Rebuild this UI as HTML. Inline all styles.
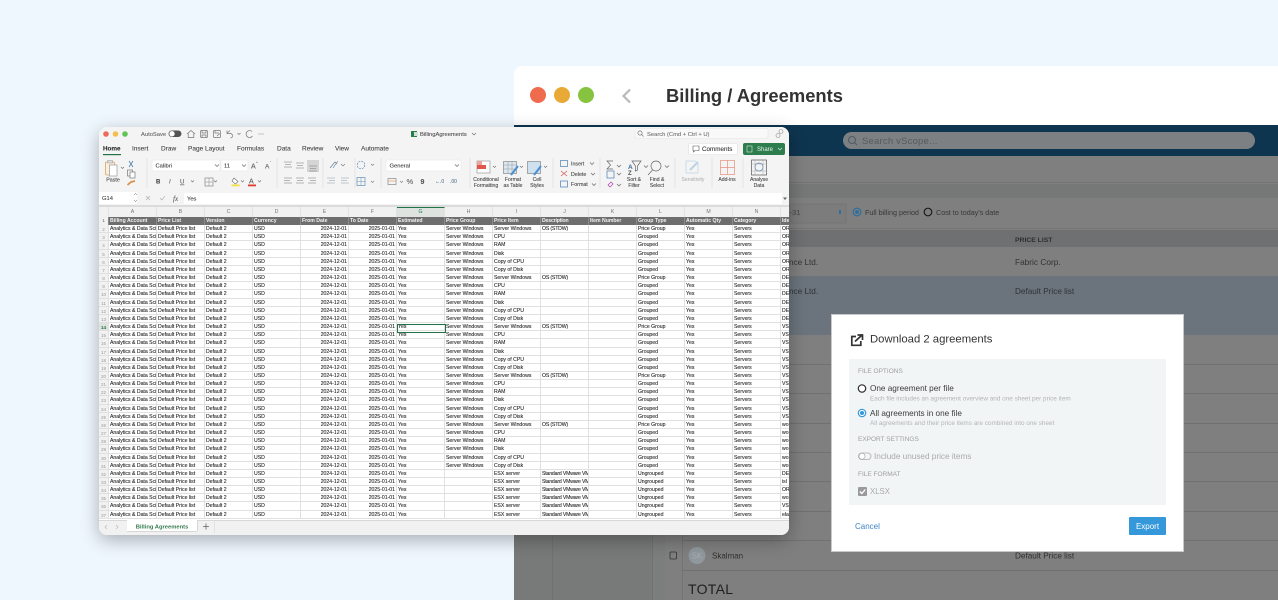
<!DOCTYPE html>
<html lang="en"><head><meta charset="utf-8"><title>Billing / Agreements</title>
<style>
html,body{margin:0;padding:0;width:1278px;height:600px;overflow:hidden;background:#eff7fe;font-family:"Liberation Sans",sans-serif}
#bg{position:absolute;left:0;top:0}
#xl{position:absolute;left:99px;top:127px;width:690px;height:408px;background:#f4f4f4;border-radius:8px;overflow:hidden;box-shadow:0 5px 18px rgba(0,0,0,.3)}
#xl svg{position:absolute;left:-99px;top:-127px}
#xl svg text{stroke:#666;stroke-width:.1}
#grid{position:absolute;left:0;top:80px;width:690px;height:313px;background:#fff;overflow:hidden}
.h{display:flex;height:10px;background:#f1f1f1}
.h i{width:48px;flex:none;box-sizing:border-box;border-right:1px solid #e2e2e2;text-align:center;font:normal 5.2px/10px "Liberation Sans",sans-serif;color:#777}
.h i:first-child{width:10px}
.h i.s{background:#dfe3df;color:#217346;border-top:1px solid #217346;line-height:9px}
.r{display:flex;height:8.17px;box-sizing:border-box;border-bottom:1px solid #e0e0e0}
.r i{width:48px;flex:none;box-sizing:border-box;border-right:1px solid #e0e0e0;padding-left:1px;overflow:hidden;white-space:nowrap;font:normal 5.15px/9.4px "Liberation Sans",sans-serif;color:#1c1c1c;-webkit-text-stroke:.1px #333}
.r i:first-child{width:10px;background:#f1f1f1;padding:0;text-align:center;color:#999;font-size:4.6px;-webkit-text-stroke:0}
.r i:nth-child(6),.r i:nth-child(7){text-align:right;padding-right:1px}
.r i:nth-child(11){letter-spacing:-.16px}
.r.t{background:#6e6e6e;border-bottom:0}
.r.t i{color:#f2f2f2;font-weight:bold;border-right:1px solid #8a8a8a;-webkit-text-stroke:0;line-height:8.4px}
.r.t i:first-child{color:#666;font-weight:normal;background:#f1f1f1}
.sel{position:absolute;left:298px;top:117px;width:49px;height:9px;box-sizing:border-box;border:1px solid #217346}
</style></head><body>

<svg id="bg" width="1278" height="600" viewBox="0 0 1278 600" font-family="'Liberation Sans',sans-serif">
<path d="M514 600V74a8 8 0 0 1 8-8H1278V600Z" fill="#fff"/>
<rect x="514" y="125" width="764" height="31" fill="#0e3550"/>
<rect x="514" y="156" width="764" height="444" fill="#7f7f7f"/>
<rect x="514" y="184" width="764" height="14" fill="#767878"/>
<rect x="514" y="182" width="764" height="1" fill="#747474"/>
<rect x="514" y="228" width="764" height="1" fill="#747474"/>
<rect x="514" y="230" width="764" height="17" fill="#6f7071"/>
<rect x="514" y="276" width="764" height="59" fill="#6b747c"/>
<g fill="#707070">
<rect x="682" y="364" width="596" height="1"/><rect x="682" y="393" width="596" height="1"/><rect x="682" y="423" width="596" height="1"/><rect x="682" y="452" width="596" height="1"/><rect x="682" y="481" width="596" height="1"/><rect x="682" y="511" width="596" height="1"/><rect x="682" y="540" width="596" height="1"/><rect x="682" y="570" width="596" height="1"/>
</g>
<rect x="514" y="530" width="138" height="70" fill="#777a79"/>
<rect x="552" y="530" width="1" height="70" fill="#6f7271"/>
<rect x="652" y="530" width="1" height="70" fill="#6f7271"/>
<rect x="653" y="530" width="12" height="70" fill="#7c7d7d"/>
<rect x="682" y="530" width="1" height="70" fill="#737373"/>
<circle cx="538" cy="95" r="8" fill="#ee6c4d"/><circle cx="562" cy="95" r="8" fill="#e9a936"/><circle cx="586" cy="95" r="8" fill="#86c440"/>
<path d="M630 89.5L623.5 96L630 102.500" fill="none" stroke="#b9b9b9" stroke-width="2.200"/>
<text x="666" y="102" font-size="18.500" font-weight="bold" fill="#333" textLength="177" lengthAdjust="spacingAndGlyphs">Billing / Agreements</text>
<rect x="843" y="132" width="412" height="17" rx="8.500" fill="#7d8082"/>
<circle cx="852" cy="140" r="3.500" fill="none" stroke="#4f5a62" stroke-width="1"/><path d="M854.500 142.500L857 145" stroke="#4f5a62"/>
<text x="862" y="144" font-size="9.500" fill="#535a60" letter-spacing=".2">Search vScope...</text>
<rect x="790" y="204" width="56" height="19" fill="#7c7c7c" stroke="#757575"/>
<text x="789.500" y="215" font-size="7.500" fill="#444">-31</text>
<rect x="839" y="210" width="2" height="4" fill="#2f6f9f"/>
<circle cx="857" cy="212" r="3.800" fill="none" stroke="#2a6e9e" stroke-width="1.200"/><circle cx="857" cy="212" r="1.900" fill="#2a6e9e"/>
<text x="865" y="215" font-size="7.200" fill="#383838">Full billing period</text>
<circle cx="928" cy="212" r="3.800" fill="none" stroke="#1c1c1c" stroke-width="1.200"/>
<text x="936" y="215" font-size="7.200" fill="#383838">Cost to today's date</text>
<text x="1015" y="242" font-size="6.800" font-weight="bold" fill="#2e2e2e">PRICE LIST</text>
<text x="789" y="265" font-size="8.200" fill="#333">nce Ltd.</text>
<text x="1015" y="265" font-size="8.300" fill="#333">Fabric Corp.</text>
<text x="789" y="294" font-size="8.200" fill="#2e3338">nce Ltd.</text>
<text x="1015" y="294" font-size="8.200" fill="#2e3338">Default Price list</text>
<rect x="670" y="552" width="6.500" height="7" rx="1" fill="none" stroke="#333" stroke-width=".8"/>
<circle cx="697" cy="555.500" r="8.500" fill="#8f989d"/>
<text x="697" y="558.500" font-size="8" text-anchor="middle" fill="#a9b0b4">SK</text>
<text x="712" y="558.500" font-size="8" fill="#2f2f2f">Skalman</text>
<text x="1015" y="558.500" font-size="8.200" fill="#2f2f2f">Default Price list</text>
<text x="688" y="594" font-size="14" fill="#1f1f1f" letter-spacing=".3">TOTAL</text>
<rect x="831" y="314" width="353" height="238" fill="#fff"/>
<rect x="831.500" y="314.500" width="352" height="237" fill="none" stroke="#c9c9c9"/>
<path d="M856 336.500H851.800V345.300H860.800V341" fill="none" stroke="#333" stroke-width="1.700"/>
<path d="M855 341.500L861.500 335.500M857.500 335H862.500V340" fill="none" stroke="#333" stroke-width="1.700"/>
<text x="870" y="342.500" font-size="11.300" fill="#333">Download 2 agreements</text>
<rect x="849" y="359" width="317" height="146" fill="#f1f5f6"/>
<g font-size="6.500" fill="#9f9f9f"><text x="858" y="373">FILE OPTIONS</text><text x="858" y="441">EXPORT SETTINGS</text><text x="858" y="476">FILE FORMAT</text></g>
<circle cx="862" cy="388.500" r="3.700" fill="#fff" stroke="#2a2a2a" stroke-width="1.200"/>
<text x="870" y="391" font-size="8.200" fill="#3c3c3c">One agreement per file</text>
<text x="870" y="400.500" font-size="6.400" fill="#b4b4b4">Each file includes an agreement overview and one sheet per price item</text>
<circle cx="862" cy="413" r="3.700" fill="#fff" stroke="#3498db" stroke-width="1.200"/><circle cx="862" cy="413" r="2" fill="#3498db"/>
<text x="870" y="416" font-size="8.200" fill="#3c3c3c">All agreements in one file</text>
<text x="870" y="425" font-size="6.400" fill="#b4b4b4">All agreements and their price items are combined into one sheet</text>
<rect x="858.500" y="453" width="12.500" height="6.500" rx="3.250" fill="#f4f6f6" stroke="#aaa" stroke-width=".8"/><circle cx="862" cy="456.200" r="3" fill="#fff" stroke="#aaa" stroke-width=".7"/>
<text x="874" y="459" font-size="8.200" fill="#aaa">Include unused price items</text>
<rect x="858" y="487" width="9" height="9" rx="1" fill="#9a9a9a"/><path d="M859.800 491.500L861.800 493.500L865.300 489.500" fill="none" stroke="#fff" stroke-width="1.300"/>
<text x="870" y="494" font-size="7.800" fill="#aaa">XLSX</text>
<text x="855" y="529" font-size="8" fill="#3f85c4">Cancel</text>
<rect x="1129" y="517" width="37" height="18" rx="1" fill="#3498db"/>
<text x="1147.500" y="529" font-size="8" fill="#fff" text-anchor="middle">Export</text>
</svg>

<div id="xl">
<svg width="1278" height="600" viewBox="0 0 1278 600" font-family="'Liberation Sans',sans-serif">
<rect x="99" y="127" width="690" height="408" fill="#f4f4f4"/>
<circle cx="106" cy="134" r="2.800" fill="#ec6a5e"/><circle cx="115.500" cy="134" r="2.800" fill="#f4bf4f"/><circle cx="125" cy="134" r="2.800" fill="#61c554"/>
<text x="141" y="136" font-size="5.800" fill="#666">AutoSave</text>
<rect x="168.500" y="130.500" width="13" height="6.500" rx="3.250" fill="#555"/><circle cx="172" cy="133.750" r="2.700" fill="#fff"/>
<g fill="none" stroke="#777" stroke-width=".7">
<path d="M187 134L191 130.500L195 134M188.200 133.500V137.500H193.800V133.500"/>
<rect x="200.500" y="130.500" width="7" height="7" rx="1"/><path d="M202 130.500V133H206V130.500M202 137.500V135H206V137.500"/>
<rect x="213.500" y="130.500" width="7" height="7" rx="1"/><path d="M215 130.500V133H219M217 136L220 133.500"/>
<path d="M227 130.500V133.500H230C233 133.500 233.500 137.500 230.500 138M227 133.500L230 130.500"/>
<path d="M237.500 133L239 134.500L240.500 133"/>
<path d="M252 131.500A3.500 3.500 0 1 0 252.500 136"/>
</g>
<text x="258" y="136" font-size="6" fill="#777">⋯</text>
<rect x="411" y="131" width="6" height="6" fill="#2a7d4d"/><rect x="414" y="132" width="4" height="4" fill="#cfe3d7"/>
<text x="420" y="136" font-size="5.800" fill="#444">BillingAgreements</text>
<path d="M472 133L474 135L476 133" fill="none" stroke="#666" stroke-width=".6"/>
<rect x="635" y="128.500" width="133" height="10" rx="2" fill="#f9f9f9" stroke="#e4e4e4" stroke-width=".6"/>
<circle cx="640" cy="133" r="2.100" fill="none" stroke="#777" stroke-width=".7"/><path d="M641.500 134.500L643.500 136.500" stroke="#777" stroke-width=".7"/>
<text x="647" y="135.800" font-size="5.800" fill="#777">Search (Cmd + Ctrl + U)</text>
<circle cx="781" cy="131.500" r="2" fill="none" stroke="#888" stroke-width=".6"/><circle cx="778" cy="135.500" r="2" fill="none" stroke="#888" stroke-width=".6"/>
<g font-size="6.500" fill="#333">
<text x="103" y="150.500" font-weight="bold" fill="#222" font-size="6.300">Home</text>
<text x="132" y="150.500">Insert</text><text x="161" y="150.500">Draw</text><text x="188" y="150.500">Page Layout</text><text x="237" y="150.500">Formulas</text><text x="277" y="150.500">Data</text><text x="302" y="150.500">Review</text><text x="335" y="150.500">View</text><text x="361" y="150.500">Automate</text>
</g>
<rect x="103" y="154" width="18" height="1.200" fill="#217346"/>
<rect x="688.500" y="143.500" width="49" height="11" rx="2" fill="#fff" stroke="#ddd" stroke-width=".6"/>
<path d="M693 146H699V150.500H695L693.500 152V150.500H693Z" fill="none" stroke="#555" stroke-width=".6"/>
<text x="702" y="151" font-size="6.300" fill="#222">Comments</text>
<rect x="743" y="143" width="42" height="12" rx="2" fill="#2e7d4f"/>
<rect x="747" y="146" width="5" height="6" fill="none" stroke="#d7e8dd" stroke-width=".6"/>
<text x="757" y="151.200" font-size="6" fill="#e6f1ea" style="stroke:none">Share</text>
<path d="M778 148L780 150L782 148" fill="none" stroke="#e6f1ea" stroke-width=".6"/>
<g stroke="#dcdcdc" stroke-width=".7">
<path d="M147 158V188M277 158V188M323 158V188M355 158V188M381 158V188M470 158V188M553 158V188M600 158V188M675 158V188M712 158V188M743 158V188"/>
</g>
<g fill="none">
<rect x="105.500" y="162" width="9" height="13" rx="1" fill="#fbeedb" stroke="#d9a468" stroke-width=".8"/>
<rect x="109.500" y="165" width="7.500" height="11" fill="#fff" stroke="#999" stroke-width=".7"/>
<rect x="107.500" y="160.500" width="5" height="2.500" fill="#ddd" stroke="#999" stroke-width=".5"/>
<path d="M121 167L122.500 168.500L124 167" stroke="#666" stroke-width=".6"/>
<path d="M129 161L133 167M133 161L129 167" stroke="#4a7fb0" stroke-width=".8"/>
<rect x="127.500" y="170" width="5" height="6" stroke="#777" stroke-width=".7"/><rect x="130" y="172" width="5" height="6" fill="#fff" stroke="#777" stroke-width=".7"/>
<path d="M127.500 185L131 182L135 181" stroke="#d9924f" stroke-width="1.800"/>
</g>
<text x="113" y="181.500" font-size="5.300" fill="#333" text-anchor="middle">Paste</text>
<rect x="152" y="160" width="68" height="11" rx="1.500" fill="#fff" stroke="#e3e3e3" stroke-width=".5"/>
<text x="155.500" y="167.500" font-size="5.800" fill="#222">Calibri</text>
<path d="M215 164.500L217 166.500L219 164.500" fill="none" stroke="#555" stroke-width=".6"/>
<rect x="221" y="160" width="27" height="11" rx="1.500" fill="#fff" stroke="#e3e3e3" stroke-width=".5"/>
<text x="224" y="167.500" font-size="5.800" fill="#222">11</text>
<path d="M242 164.500L244 166.500L246 164.500" fill="none" stroke="#555" stroke-width=".6"/>
<text x="251" y="168.500" font-size="7" fill="#555">A</text><text x="256" y="164" font-size="3.500" fill="#555">^</text>
<text x="265" y="168.500" font-size="6.500" fill="#555">A</text><text x="270" y="164" font-size="3.500" fill="#555">ˇ</text>
<text x="156" y="183.500" font-size="6" font-weight="bold" fill="#444">B</text>
<text x="169" y="183.500" font-size="6" font-style="italic" fill="#666">I</text>
<text x="180" y="183.500" font-size="6" fill="#666" text-decoration="underline">U</text>
<path d="M191 180.500L192.500 182L194 180.500M214 180.500L215.500 182L217 180.500M241 180.500L242.500 182L244 180.500M258 180.500L259.500 182L261 180.500" fill="none" stroke="#666" stroke-width=".6"/>
<rect x="205" y="178" width="8" height="8" fill="none" stroke="#888" stroke-width=".7"/><path d="M209 178V186M205 182H213" stroke="#888" stroke-width=".5"/>
<path d="M234 178L238 181.500L235.500 184L232 181Z" fill="#fff" stroke="#666" stroke-width=".6"/><rect x="231.500" y="184.500" width="8" height="1.800" fill="#f6e23a"/>
<text x="249" y="183.500" font-size="7" fill="#555">A</text><rect x="248" y="184.500" width="8" height="1.800" fill="#e23b2e"/>
<g stroke="#777" stroke-width=".6">
<path d="M284 162H292M285 164.500H291M284 167H292M296 163H304M297 165.500H303M296 168H304"/>
<rect x="307" y="160" width="12" height="12" fill="#d5d5d5" stroke="none"/>
<path d="M309 166H317M310 168.500H316M309 171H317"/>
<path d="M284 178H292M284 180.500H290M284 183H292M296 178H304M297 180.500H303M296 183H304M308 178H316M310 180.500H316M308 183H316"/>
<path d="M327 178H335M329 180.500H335M327 183H335M341 178H349M341 180.500H347M341 183H349" stroke="#8a9aa8"/>
</g>
<g fill="none" stroke="#777" stroke-width=".6">
<path d="M330 168L335 162L337 164M333 168L338 161" stroke="#5c7a94"/>
<path d="M341 164L343 166L345 164M371 164L372.500 165.500L374 164M371 181L372.500 182.500L374 181M400 181L401.500 182.500L403 181"/>
<circle cx="361" cy="165" r="3.800" stroke="#4a7fb0" stroke-dasharray="2 1"/>
<rect x="357" y="177.500" width="8" height="8" stroke="#4a7fb0"/><path d="M361 177.500V185.500M357 181.500H365" stroke="#4a7fb0" stroke-width=".4"/>
<rect x="388" y="178.500" width="8" height="6" stroke="#777"/><path d="M388 181H396" stroke="#d9924f"/>
</g>
<rect x="386" y="160" width="75" height="11" rx="1.500" fill="#fff" stroke="#e3e3e3" stroke-width=".5"/>
<text x="389.500" y="167.500" font-size="5.800" fill="#222">General</text>
<path d="M455 164.500L457 166.500L459 164.500" fill="none" stroke="#555" stroke-width=".6"/>
<text x="406.500" y="184" font-size="7.500" fill="#666">%</text><text x="420.500" y="184" font-size="7" font-weight="bold" fill="#555">9</text>
<text x="435" y="183" font-size="5" fill="#5b87ad">←.0</text><text x="450" y="183" font-size="5" fill="#5b87ad">.00</text>
<rect x="477" y="161" width="13" height="12" fill="#fff" stroke="#888" stroke-width=".6"/><rect x="477" y="165" width="9" height="4" fill="#e2574c"/><rect x="477" y="161" width="5" height="4" fill="#e9a5a0"/>
<rect x="503.500" y="161.500" width="13" height="12" fill="#dbe7f1" stroke="#777" stroke-width=".6"/><path d="M508 161.500V173M512 161.500V173M503.500 165H516M503.500 169H516" stroke="#888" stroke-width=".4"/><path d="M511 175L518 166" stroke="#4a8fd0" stroke-width="2"/>
<rect x="527.500" y="161.500" width="13" height="12" fill="#cfe0ef" stroke="#777" stroke-width=".6"/><path d="M534 175L541 166" stroke="#4a8fd0" stroke-width="2"/>
<path d="M493 166L494.500 167.500L496 166M520 166L521.500 167.500L523 166M544 166L545.500 167.500L547 166" fill="none" stroke="#666" stroke-width=".6"/>
<g font-size="5.100" fill="#333" text-anchor="middle">
<text x="486" y="181">Conditional</text><text x="486" y="187">Formatting</text>
<text x="513" y="181">Format</text><text x="513" y="187">as Table</text>
<text x="537" y="181">Cell</text><text x="537" y="187">Styles</text>
<text x="634" y="181">Sort &amp;</text><text x="634" y="187">Filter</text>
<text x="657" y="181">Find &amp;</text><text x="657" y="187">Select</text>
<text x="693" y="181" fill="#aaa" style="stroke:none">Sensitivity</text>
<text x="727" y="181">Add-ins</text>
<text x="759" y="181">Analyse</text><text x="759" y="187">Data</text>
</g>
<g fill="none" stroke="#666" stroke-width=".7">
<rect x="560.500" y="160.500" width="7" height="6" stroke="#4a7fb0"/><path d="M561 171L567 176M567 171L561 176" stroke="#d9534f"/><rect x="560.500" y="181" width="7" height="6" stroke="#4a7fb0"/>
<path d="M590 162.500L592 164.500L594 162.500M591 173L593 175L595 173M592 183.500L594 185.500L596 183.500"/>
<rect x="607" y="171" width="7" height="7" stroke="#4a7fb0"/>
<path d="M613 161H607L610.500 165L607 169H613"/>
<path d="M608 185L611 182L613 184L610 187Z" stroke="#b03fb0"/>
<path d="M617 165L619 167L621 165M617 173L619 175L621 173M617 184L619 186L621 184"/>
<path d="M632 161H641L637.500 166V170L635.500 171V166Z"/>
<circle cx="656" cy="166" r="5"/><path d="M652.500 170L648 175"/>
<path d="M665 165.500L667 167.500L669 165.500"/>
<path d="M644 165.500L646 167.500L648 165.500"/>
<path d="M686 161H695L698 164V173H686Z" stroke="#bcd2e6"/><path d="M690 170L698 162" stroke="#bcd2e6" stroke-width="2"/>
<rect x="720.500" y="160.500" width="14" height="14" stroke="#e58f7d"/><path d="M727.500 160.500V174.500M720.500 167.500H734.500" stroke="#e58f7d"/>
<rect x="751.500" y="160" width="15" height="15" stroke="#555"/>
<circle cx="759" cy="167" r="4" stroke="#4a7fb0"/><path d="M751.500 164H766.500M751.500 171H766.500M755 160V175M763 160V175" stroke="#999" stroke-width=".4"/>
</g>
<text x="628" y="169" font-size="6.500" fill="#4a7fb0" font-weight="bold">A</text><text x="628" y="175" font-size="6" fill="#555" font-weight="bold">Z</text>
<g font-size="5.300" fill="#333">
<text x="571" y="165.500">Insert</text><text x="571" y="175.800">Delete</text><text x="571" y="186">Format</text>
</g>
<rect x="99" y="190" width="690" height="17" fill="#f4f4f4"/>
<rect x="99" y="192" width="38" height="12" fill="#fff"/>
<text x="102" y="200" font-size="5.800" fill="#333">G14</text>
<path d="M134 195L135.500 193.500L137 195M134 200L135.500 201.500L137 200" fill="none" stroke="#666" stroke-width=".5"/>
<path d="M146 196L150 200M150 196L146 200" stroke="#aaa" stroke-width=".6"/>
<path d="M160 198L162 200L165 196" fill="none" stroke="#aaa" stroke-width=".6"/>
<text x="173" y="201" font-size="7" font-family="'Liberation Serif',serif" font-style="italic" fill="#555">fx</text>
<rect x="184" y="193" width="605" height="11" fill="#fff"/>
<text x="187" y="200.500" font-size="5.800" fill="#222">Yes</text>
<rect x="782" y="193" width="7" height="11" fill="#f4f4f4"/>
<path d="M783 197.500H787L785 200Z" fill="#666"/>
<rect x="99" y="205" width="690" height="2" fill="#dbdbdb"/>
<rect x="99" y="520" width="690" height="15" fill="#f1f1f1"/>
<rect x="99" y="520" width="690" height="1" fill="#d8d8d8"/>
<path d="M107 525L105 527L107 529M116 525L118 527L116 529" fill="none" stroke="#bbb" stroke-width=".7"/>
<rect x="127" y="520" width="70" height="11" fill="#fff"/><rect x="197" y="521" width=".7" height="10" fill="#ccc"/>
<rect x="127" y="531" width="70" height=".7" fill="#ccc"/>
<text x="162" y="528.500" font-size="5.800" font-weight="bold" fill="#357a4f" text-anchor="middle" style="stroke:none">Billing Agreements</text>
<path d="M203 526.500H209M206 523.500V529.500" stroke="#666" stroke-width=".8"/>
<rect x="214" y="521" width=".7" height="12" fill="#dcdcdc"/>
</svg>
<div id="grid">
<div class="h"><i></i><i>A</i><i>B</i><i>C</i><i>D</i><i>E</i><i>F</i><i class="s">G</i><i>H</i><i>I</i><i>J</i><i>K</i><i>L</i><i>M</i><i>N</i><i>O</i></div>
<div class="r t"><i>1</i><i>Billing Account</i><i>Price List</i><i>Version</i><i>Currency</i><i style="text-align:left">From Date</i><i style="text-align:left">To Date</i><i>Estimated</i><i>Price Group</i><i>Price Item</i><i>Description</i><i>Item Number</i><i>Group Type</i><i>Automatic Qty</i><i>Category</i><i>Ide</i></div>
<div class="r"><i>2</i><i>Analytics &amp; Data Science</i><i>Default Price list</i><i>Default 2</i><i>USD</i><i>2024-12-01</i><i>2025-01-01</i><i>Yes</i><i>Server Windows</i><i>Server Windows</i><i>OS (STDW)</i><i></i><i>Price Group</i><i>Yes</i><i>Servers</i><i>OR</i></div>
<div class="r"><i>3</i><i>Analytics &amp; Data Science</i><i>Default Price list</i><i>Default 2</i><i>USD</i><i>2024-12-01</i><i>2025-01-01</i><i>Yes</i><i>Server Windows</i><i>CPU</i><i></i><i></i><i>Grouped</i><i>Yes</i><i>Servers</i><i>OR</i></div>
<div class="r"><i>4</i><i>Analytics &amp; Data Science</i><i>Default Price list</i><i>Default 2</i><i>USD</i><i>2024-12-01</i><i>2025-01-01</i><i>Yes</i><i>Server Windows</i><i>RAM</i><i></i><i></i><i>Grouped</i><i>Yes</i><i>Servers</i><i>OR</i></div>
<div class="r"><i>5</i><i>Analytics &amp; Data Science</i><i>Default Price list</i><i>Default 2</i><i>USD</i><i>2024-12-01</i><i>2025-01-01</i><i>Yes</i><i>Server Windows</i><i>Disk</i><i></i><i></i><i>Grouped</i><i>Yes</i><i>Servers</i><i>OR</i></div>
<div class="r"><i>6</i><i>Analytics &amp; Data Science</i><i>Default Price list</i><i>Default 2</i><i>USD</i><i>2024-12-01</i><i>2025-01-01</i><i>Yes</i><i>Server Windows</i><i>Copy of CPU</i><i></i><i></i><i>Grouped</i><i>Yes</i><i>Servers</i><i>OR</i></div>
<div class="r"><i>7</i><i>Analytics &amp; Data Science</i><i>Default Price list</i><i>Default 2</i><i>USD</i><i>2024-12-01</i><i>2025-01-01</i><i>Yes</i><i>Server Windows</i><i>Copy of Disk</i><i></i><i></i><i>Grouped</i><i>Yes</i><i>Servers</i><i>OR</i></div>
<div class="r"><i>8</i><i>Analytics &amp; Data Science</i><i>Default Price list</i><i>Default 2</i><i>USD</i><i>2024-12-01</i><i>2025-01-01</i><i>Yes</i><i>Server Windows</i><i>Server Windows</i><i>OS (STDW)</i><i></i><i>Price Group</i><i>Yes</i><i>Servers</i><i>DE</i></div>
<div class="r"><i>9</i><i>Analytics &amp; Data Science</i><i>Default Price list</i><i>Default 2</i><i>USD</i><i>2024-12-01</i><i>2025-01-01</i><i>Yes</i><i>Server Windows</i><i>CPU</i><i></i><i></i><i>Grouped</i><i>Yes</i><i>Servers</i><i>DE</i></div>
<div class="r"><i>10</i><i>Analytics &amp; Data Science</i><i>Default Price list</i><i>Default 2</i><i>USD</i><i>2024-12-01</i><i>2025-01-01</i><i>Yes</i><i>Server Windows</i><i>RAM</i><i></i><i></i><i>Grouped</i><i>Yes</i><i>Servers</i><i>DE</i></div>
<div class="r"><i>11</i><i>Analytics &amp; Data Science</i><i>Default Price list</i><i>Default 2</i><i>USD</i><i>2024-12-01</i><i>2025-01-01</i><i>Yes</i><i>Server Windows</i><i>Disk</i><i></i><i></i><i>Grouped</i><i>Yes</i><i>Servers</i><i>DE</i></div>
<div class="r"><i>12</i><i>Analytics &amp; Data Science</i><i>Default Price list</i><i>Default 2</i><i>USD</i><i>2024-12-01</i><i>2025-01-01</i><i>Yes</i><i>Server Windows</i><i>Copy of CPU</i><i></i><i></i><i>Grouped</i><i>Yes</i><i>Servers</i><i>DE</i></div>
<div class="r"><i>13</i><i>Analytics &amp; Data Science</i><i>Default Price list</i><i>Default 2</i><i>USD</i><i>2024-12-01</i><i>2025-01-01</i><i>Yes</i><i>Server Windows</i><i>Copy of Disk</i><i></i><i></i><i>Grouped</i><i>Yes</i><i>Servers</i><i>DE</i></div>
<div class="r"><i style="color:#217346;font-weight:bold;background:#dfe3df">14</i><i>Analytics &amp; Data Science</i><i>Default Price list</i><i>Default 2</i><i>USD</i><i>2024-12-01</i><i>2025-01-01</i><i>Yes</i><i>Server Windows</i><i>Server Windows</i><i>OS (STDW)</i><i></i><i>Price Group</i><i>Yes</i><i>Servers</i><i>VS</i></div>
<div class="r"><i>15</i><i>Analytics &amp; Data Science</i><i>Default Price list</i><i>Default 2</i><i>USD</i><i>2024-12-01</i><i>2025-01-01</i><i>Yes</i><i>Server Windows</i><i>CPU</i><i></i><i></i><i>Grouped</i><i>Yes</i><i>Servers</i><i>VS</i></div>
<div class="r"><i>16</i><i>Analytics &amp; Data Science</i><i>Default Price list</i><i>Default 2</i><i>USD</i><i>2024-12-01</i><i>2025-01-01</i><i>Yes</i><i>Server Windows</i><i>RAM</i><i></i><i></i><i>Grouped</i><i>Yes</i><i>Servers</i><i>VS</i></div>
<div class="r"><i>17</i><i>Analytics &amp; Data Science</i><i>Default Price list</i><i>Default 2</i><i>USD</i><i>2024-12-01</i><i>2025-01-01</i><i>Yes</i><i>Server Windows</i><i>Disk</i><i></i><i></i><i>Grouped</i><i>Yes</i><i>Servers</i><i>VS</i></div>
<div class="r"><i>18</i><i>Analytics &amp; Data Science</i><i>Default Price list</i><i>Default 2</i><i>USD</i><i>2024-12-01</i><i>2025-01-01</i><i>Yes</i><i>Server Windows</i><i>Copy of CPU</i><i></i><i></i><i>Grouped</i><i>Yes</i><i>Servers</i><i>VS</i></div>
<div class="r"><i>19</i><i>Analytics &amp; Data Science</i><i>Default Price list</i><i>Default 2</i><i>USD</i><i>2024-12-01</i><i>2025-01-01</i><i>Yes</i><i>Server Windows</i><i>Copy of Disk</i><i></i><i></i><i>Grouped</i><i>Yes</i><i>Servers</i><i>VS</i></div>
<div class="r"><i>20</i><i>Analytics &amp; Data Science</i><i>Default Price list</i><i>Default 2</i><i>USD</i><i>2024-12-01</i><i>2025-01-01</i><i>Yes</i><i>Server Windows</i><i>Server Windows</i><i>OS (STDW)</i><i></i><i>Price Group</i><i>Yes</i><i>Servers</i><i>VS</i></div>
<div class="r"><i>21</i><i>Analytics &amp; Data Science</i><i>Default Price list</i><i>Default 2</i><i>USD</i><i>2024-12-01</i><i>2025-01-01</i><i>Yes</i><i>Server Windows</i><i>CPU</i><i></i><i></i><i>Grouped</i><i>Yes</i><i>Servers</i><i>VS</i></div>
<div class="r"><i>22</i><i>Analytics &amp; Data Science</i><i>Default Price list</i><i>Default 2</i><i>USD</i><i>2024-12-01</i><i>2025-01-01</i><i>Yes</i><i>Server Windows</i><i>RAM</i><i></i><i></i><i>Grouped</i><i>Yes</i><i>Servers</i><i>VS</i></div>
<div class="r"><i>23</i><i>Analytics &amp; Data Science</i><i>Default Price list</i><i>Default 2</i><i>USD</i><i>2024-12-01</i><i>2025-01-01</i><i>Yes</i><i>Server Windows</i><i>Disk</i><i></i><i></i><i>Grouped</i><i>Yes</i><i>Servers</i><i>VS</i></div>
<div class="r"><i>24</i><i>Analytics &amp; Data Science</i><i>Default Price list</i><i>Default 2</i><i>USD</i><i>2024-12-01</i><i>2025-01-01</i><i>Yes</i><i>Server Windows</i><i>Copy of CPU</i><i></i><i></i><i>Grouped</i><i>Yes</i><i>Servers</i><i>VS</i></div>
<div class="r"><i>25</i><i>Analytics &amp; Data Science</i><i>Default Price list</i><i>Default 2</i><i>USD</i><i>2024-12-01</i><i>2025-01-01</i><i>Yes</i><i>Server Windows</i><i>Copy of Disk</i><i></i><i></i><i>Grouped</i><i>Yes</i><i>Servers</i><i>VS</i></div>
<div class="r"><i>26</i><i>Analytics &amp; Data Science</i><i>Default Price list</i><i>Default 2</i><i>USD</i><i>2024-12-01</i><i>2025-01-01</i><i>Yes</i><i>Server Windows</i><i>Server Windows</i><i>OS (STDW)</i><i></i><i>Price Group</i><i>Yes</i><i>Servers</i><i>wo</i></div>
<div class="r"><i>27</i><i>Analytics &amp; Data Science</i><i>Default Price list</i><i>Default 2</i><i>USD</i><i>2024-12-01</i><i>2025-01-01</i><i>Yes</i><i>Server Windows</i><i>CPU</i><i></i><i></i><i>Grouped</i><i>Yes</i><i>Servers</i><i>wo</i></div>
<div class="r"><i>28</i><i>Analytics &amp; Data Science</i><i>Default Price list</i><i>Default 2</i><i>USD</i><i>2024-12-01</i><i>2025-01-01</i><i>Yes</i><i>Server Windows</i><i>RAM</i><i></i><i></i><i>Grouped</i><i>Yes</i><i>Servers</i><i>wo</i></div>
<div class="r"><i>29</i><i>Analytics &amp; Data Science</i><i>Default Price list</i><i>Default 2</i><i>USD</i><i>2024-12-01</i><i>2025-01-01</i><i>Yes</i><i>Server Windows</i><i>Disk</i><i></i><i></i><i>Grouped</i><i>Yes</i><i>Servers</i><i>wo</i></div>
<div class="r"><i>30</i><i>Analytics &amp; Data Science</i><i>Default Price list</i><i>Default 2</i><i>USD</i><i>2024-12-01</i><i>2025-01-01</i><i>Yes</i><i>Server Windows</i><i>Copy of CPU</i><i></i><i></i><i>Grouped</i><i>Yes</i><i>Servers</i><i>wo</i></div>
<div class="r"><i>31</i><i>Analytics &amp; Data Science</i><i>Default Price list</i><i>Default 2</i><i>USD</i><i>2024-12-01</i><i>2025-01-01</i><i>Yes</i><i>Server Windows</i><i>Copy of Disk</i><i></i><i></i><i>Grouped</i><i>Yes</i><i>Servers</i><i>wo</i></div>
<div class="r"><i>32</i><i>Analytics &amp; Data Science</i><i>Default Price list</i><i>Default 2</i><i>USD</i><i>2024-12-01</i><i>2025-01-01</i><i>Yes</i><i></i><i>ESX server</i><i>Standard VMware VM</i><i></i><i>Ungrouped</i><i>Yes</i><i>Servers</i><i>DE</i></div>
<div class="r"><i>33</i><i>Analytics &amp; Data Science</i><i>Default Price list</i><i>Default 2</i><i>USD</i><i>2024-12-01</i><i>2025-01-01</i><i>Yes</i><i></i><i>ESX server</i><i>Standard VMware VM</i><i></i><i>Ungrouped</i><i>Yes</i><i>Servers</i><i>isl</i></div>
<div class="r"><i>34</i><i>Analytics &amp; Data Science</i><i>Default Price list</i><i>Default 2</i><i>USD</i><i>2024-12-01</i><i>2025-01-01</i><i>Yes</i><i></i><i>ESX server</i><i>Standard VMware VM</i><i></i><i>Ungrouped</i><i>Yes</i><i>Servers</i><i>OR</i></div>
<div class="r"><i>35</i><i>Analytics &amp; Data Science</i><i>Default Price list</i><i>Default 2</i><i>USD</i><i>2024-12-01</i><i>2025-01-01</i><i>Yes</i><i></i><i>ESX server</i><i>Standard VMware VM</i><i></i><i>Ungrouped</i><i>Yes</i><i>Servers</i><i>wo</i></div>
<div class="r"><i>36</i><i>Analytics &amp; Data Science</i><i>Default Price list</i><i>Default 2</i><i>USD</i><i>2024-12-01</i><i>2025-01-01</i><i>Yes</i><i></i><i>ESX server</i><i>Standard VMware VM</i><i></i><i>Ungrouped</i><i>Yes</i><i>Servers</i><i>VS</i></div>
<div class="r"><i>37</i><i>Analytics &amp; Data Science</i><i>Default Price list</i><i>Default 2</i><i>USD</i><i>2024-12-01</i><i>2025-01-01</i><i>Yes</i><i></i><i>ESX server</i><i>Standard VMware VM</i><i></i><i>Ungrouped</i><i>Yes</i><i>Servers</i><i>ela</i></div>
<div class="sel"></div>
</div>
</div>
</body></html>
